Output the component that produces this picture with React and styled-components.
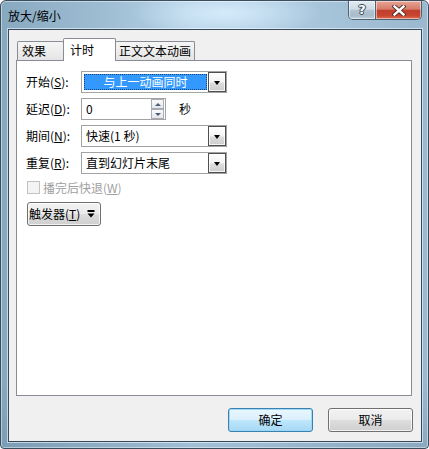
import React from "react";
import styled, { createGlobalStyle } from "styled-components";

const Global = createGlobalStyle`
  html, body { margin: 0; padding: 0; background: #ffffff; }
  body {
    font-family: "Noto Sans CJK SC", "Noto Sans", sans-serif;
    font-size: 12px;
    color: #000;
    overflow: hidden;
  }
  * { box-sizing: border-box; }
  u { text-decoration: underline; text-underline-offset: 1px; }
`;

const Window = styled.div`
  width: 429px;
  height: 449px;
  border: 1px solid #3a4e5e;
  border-radius: 6px 6px 4px 4px;
  padding: 0 6px 6px 7px;
  display: flex;
  flex-direction: column;
  background:
    radial-gradient(ellipse 95px 24px at 225px 12px, rgba(214, 236, 251, 0.95), rgba(214, 236, 251, 0) 100%),
    linear-gradient(to bottom, rgba(255, 255, 255, 0) 85%, rgba(60, 100, 130, 0.18) 100%),
    linear-gradient(to right, #87a9c0 0%, #9fbed4 25%, #b6d2e7 45%, #b1cde3 60%, #a3c1d7 80%, #9ab8ce 100%);
  box-shadow: inset 0 0 0 1px rgba(255, 255, 255, 0.45);
`;

const TitleBar = styled.div`
  height: 28px;
  flex-shrink: 0;
  display: flex;
  align-items: flex-start;
`;

const Title = styled.span`
  margin-top: 6px;
  line-height: 17px;
  font-size: 12px;
  color: #000;
`;

const Caption = styled.div`
  margin-left: auto;
  display: flex;
  height: 19px;
  border: 1px solid #4b6375;
  border-top: none;
  border-radius: 0 0 5px 5px;
  overflow: hidden;
`;

const CapBtn = styled.div`
  width: ${(p) => p.$w}px;
  display: flex;
  align-items: center;
  justify-content: center;
  background: ${(p) =>
    p.$close
      ? "linear-gradient(#e8a596 0%, #d77c6b 45%, #c13f2b 52%, #c8442f 80%, #dd6f55 100%)"
      : "linear-gradient(#e1eaf1 0%, #cfdce6 45%, #b2c4d2 52%, #a9bccb 80%, #c0d2e0 100%)"};
  box-shadow: inset 0 0 0 1px rgba(255, 255, 255, 0.5);
  & + & { border-left: 1px solid #4b6375; }
`;

const HelpGlyph = styled.span`
  font-family: "DejaVu Sans", sans-serif;
  font-weight: bold;
  font-size: 13px;
  line-height: 14px;
  color: #ffffff;
  text-shadow: 0 0 1px #2d3e4c, 1px 0 0 #3b4d5c, -1px 0 0 #3b4d5c, 0 1px 0 #3b4d5c, 0 -1px 0 #3b4d5c;
`;

const Client = styled.div`
  flex: 1;
  display: flex;
  flex-direction: column;
  background: #f0f0f0;
  border: 1px solid #36495a;
  box-shadow: 0 0 0 1px rgba(255, 255, 255, 0.55);
  padding: 8px 9px 0 7px;
`;

const TabStrip = styled.div`
  height: 22px;
  display: flex;
  align-items: flex-end;
  padding-left: 1px;
`;

const Tab = styled.div`
  position: relative;
  z-index: ${(p) => (p.$active ? 2 : 1)};
  height: ${(p) => (p.$active ? 23 : 19)}px;
  width: ${(p) => p.$w}px;
  margin-left: ${(p) => (p.$first ? 0 : -1)}px;
  margin-bottom: ${(p) => (p.$active ? -1 : 0)}px;
  padding-left: ${(p) => p.$pl}px;
  border: 1px solid #898c95;
  border-bottom: none;
  border-radius: 2px 2px 0 0;
  background: ${(p) => (p.$active ? "#ffffff" : "linear-gradient(#f5f5f5, #e5e5e5)")};
  display: flex;
  align-items: center;
  line-height: 16px;
  white-space: nowrap;
`;

const Panel = styled.div`
  height: 336px;
  flex-shrink: 0;
  border: 1px solid #898c95;
  background: #ffffff;
  padding: 10px 0 0 9px;
  display: flex;
  flex-direction: column;
  align-items: flex-start;
`;

const Form = styled.div`
  display: flex;
  flex-direction: column;
  gap: 5px;
`;

const Row = styled.div`
  height: 22px;
  display: flex;
  align-items: center;
`;

const Label = styled.span`
  width: 55px;
  line-height: 16px;
  white-space: nowrap;
`;

const Combo = styled.div`
  width: 146px;
  height: 22px;
  border: 1px solid #a3a3a3;
  background: #ffffff;
  display: flex;
`;

const Value = styled.div`
  flex: 1;
  display: flex;
  align-items: center;
  line-height: 16px;
  white-space: nowrap;
  margin: ${(p) => (p.$selected ? "2px 1px 2px 2px" : "0")};
  padding-left: ${(p) => (p.$selected ? 0 : 4)}px;
  justify-content: ${(p) => (p.$selected ? "center" : "flex-start")};
  background: ${(p) => (p.$selected ? "#3399ff" : "transparent")};
  color: ${(p) => (p.$selected ? "#ffffff" : "#000000")};
  outline: ${(p) => (p.$selected ? "1px dotted rgba(0,0,0,0.55)" : "none")};
  outline-offset: -1px;
`;

const DropBtn = styled.div`
  width: 18px;
  height: 20px;
  border: 1px solid #4f4f4f;
  background: linear-gradient(#ffffff 0%, #f3f3f3 50%, #dddddd 55%, #cdcdcd 100%);
  box-shadow: inset 0 0 0 1px rgba(255, 255, 255, 0.8);
  display: flex;
  align-items: center;
  justify-content: center;
`;

const Tri = styled.div`
  width: 0;
  height: 0;
  border-left: ${(p) => p.$s}px solid transparent;
  border-right: ${(p) => p.$s}px solid transparent;
  border-top: ${(p) => p.$h}px solid ${(p) => p.$c || "#000"};
  margin-top: 1px;
`;

const TriUp = styled.div`
  width: 0;
  height: 0;
  border-left: 3px solid transparent;
  border-right: 3px solid transparent;
  border-bottom: 3px solid #4a5b7a;
`;

const Field = styled.div`
  width: 85px;
  height: 22px;
  border: 1px solid #a3a3a3;
  background: #ffffff;
  display: flex;
  align-items: stretch;
`;

const FieldText = styled.div`
  flex: 1;
  padding-left: 4px;
  display: flex;
  align-items: center;
  line-height: 16px;
`;

const Spin = styled.div`
  width: 13px;
  margin-right: 1px;
  display: flex;
  flex-direction: column;
`;

const SpinBtn = styled.div`
  flex: 1;
  border: 1px solid #a7abb3;
  background: linear-gradient(#fbfbfb, #e4e6ea);
  display: flex;
  align-items: center;
  justify-content: center;
  & + & { margin-top: 0; }
`;

const Unit = styled.span`
  margin-left: 13px;
  line-height: 16px;
`;

const CheckRow = styled.div`
  margin-top: 7px;
  height: 13px;
  display: flex;
  align-items: center;
  gap: 3px;
  padding-left: 1px;
  color: #a0a0a0;
`;

const Box = styled.div`
  width: 13px;
  height: 13px;
  border: 1px solid #c2c2c2;
  background: #f4f4f4;
`;

const CheckText = styled.span`
  line-height: 16px;
  white-space: nowrap;
`;

const PushButton = styled.div`
  width: ${(p) => p.$w}px;
  height: 24px;
  border: 1px solid ${(p) => (p.$default ? "#3c7fb1" : "#707070")};
  border-radius: 3px;
  background: ${(p) =>
    p.$default
      ? "linear-gradient(#eaf6fd 0%, #d9f0fc 50%, #bee6fd 52%, #a7d9f5 100%)"
      : "linear-gradient(#f2f2f2 0%, #ebebeb 50%, #dddddd 52%, #cfcfcf 100%)"};
  box-shadow: inset 0 0 0 1px ${(p) => (p.$default ? "rgba(150,215,245,0.9)" : "rgba(255,255,255,0.75)")};
  display: flex;
  align-items: center;
  justify-content: ${(p) => (p.$left ? "flex-start" : "center")};
  padding-left: ${(p) => (p.$left ? 1 : 0)}px;
  line-height: 16px;
  white-space: nowrap;
`;

const TriggerWrap = styled.div`
  margin-top: 8px;
  padding-left: 1px;
`;

const TriggerIcon = styled.svg`
  margin-left: 7px;
  flex-shrink: 0;
`;

const Footer = styled.div`
  padding-top: 12px;
  margin-right: -1px;
  display: flex;
  justify-content: flex-end;
  gap: 15px;
`;

const combos = [
  { label: "开始", key: "S", value: "与上一动画同时", selected: true },
];

export default function App() {
  return (
    <>
      <Global />
      <Window>
        <TitleBar>
          <Title>放大/缩小</Title>
          <Caption>
            <CapBtn $w={26}>
              <HelpGlyph>?</HelpGlyph>
            </CapBtn>
            <CapBtn $w={46} $close>
              <svg width="14" height="11" viewBox="0 0 14 11">
                <path d="M2.5 1.5 L11.5 9.5 M11.5 1.5 L2.5 9.5" stroke="#4a2a24" strokeWidth="4.2" strokeLinecap="square" />
                <path d="M2.5 1.5 L11.5 9.5 M11.5 1.5 L2.5 9.5" stroke="#ffffff" strokeWidth="2.4" strokeLinecap="square" />
              </svg>
            </CapBtn>
          </Caption>
        </TitleBar>
        <Client>
          <TabStrip>
            <Tab $first $w={47} $pl={4}>效果</Tab>
            <Tab $active $w={53} $pl={6}>计时</Tab>
            <Tab $w={80} $pl={3}>正文文本动画</Tab>
          </TabStrip>
          <Panel>
            <Form>
              {combos.map((c) => (
                <Row key={c.key}>
                  <Label>
                    {c.label}(<u>{c.key}</u>):
                  </Label>
                  <Combo>
                    <Value $selected={c.selected}>{c.value}</Value>
                    <DropBtn>
                      <Tri $s={3.5} $h={4} />
                    </DropBtn>
                  </Combo>
                </Row>
              ))}
              <Row>
                <Label>
                  延迟(<u>D</u>):
                </Label>
                <Field>
                  <FieldText>0</FieldText>
                  <Spin>
                    <SpinBtn>
                      <TriUp />
                    </SpinBtn>
                    <SpinBtn>
                      <Tri $s={3} $h={3} $c="#4a5b7a" />
                    </SpinBtn>
                  </Spin>
                </Field>
                <Unit>秒</Unit>
              </Row>
              <Row>
                <Label>
                  期间(<u>N</u>):
                </Label>
                <Combo>
                  <Value>快速(1 秒)</Value>
                  <DropBtn>
                    <Tri $s={3.5} $h={4} />
                  </DropBtn>
                </Combo>
              </Row>
              <Row>
                <Label>
                  重复(<u>R</u>):
                </Label>
                <Combo>
                  <Value>直到幻灯片末尾</Value>
                  <DropBtn>
                    <Tri $s={3.5} $h={4} />
                  </DropBtn>
                </Combo>
              </Row>
            </Form>
            <CheckRow>
              <Box />
              <CheckText>
                播完后快退(<u>W</u>)
              </CheckText>
            </CheckRow>
            <TriggerWrap>
              <PushButton $w={74} $left>
                触发器(<u>T</u>)
                <TriggerIcon width="8" height="8" viewBox="0 0 8 8">
                  <rect x="0.5" y="0" width="7" height="2" fill="#000" />
                  <path d="M0.5 3.5 L7.5 3.5 L4 7.5 Z" fill="#000" />
                </TriggerIcon>
              </PushButton>
            </TriggerWrap>
          </Panel>
          <Footer>
            <PushButton $w={85} $default>确定</PushButton>
            <PushButton $w={85}>取消</PushButton>
          </Footer>
        </Client>
      </Window>
    </>
  );
}
